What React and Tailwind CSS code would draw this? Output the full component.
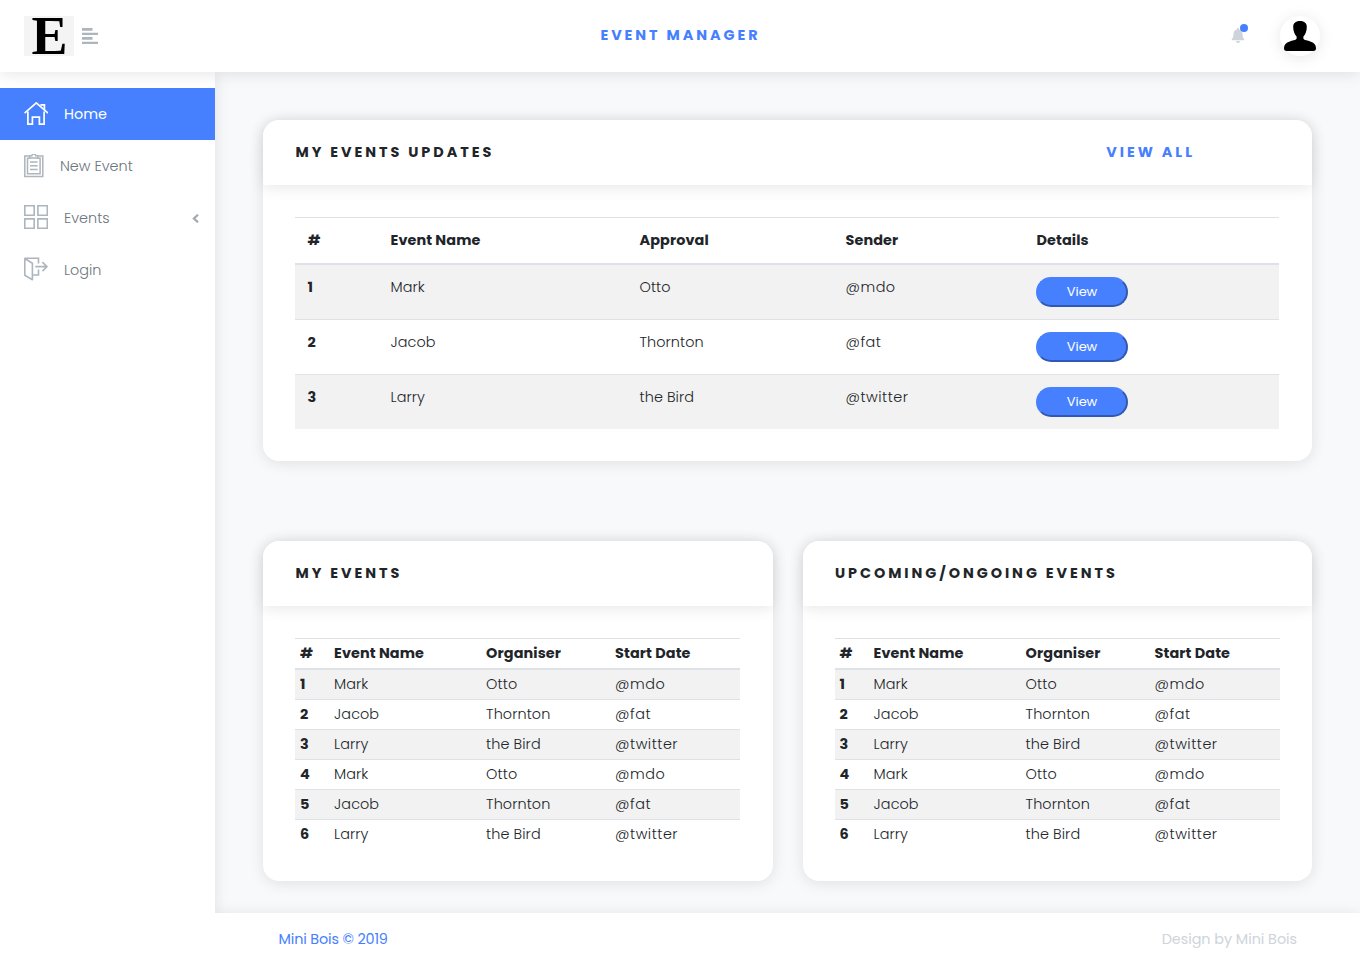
import React from "react";

const PEOPLE = [
  ["Mark", "Otto", "@mdo"],
  ["Jacob", "Thornton", "@fat"],
  ["Larry", "the Bird", "@twitter"],
];

function HomeIcon() {
  return (
    <svg className="h-6 w-6" viewBox="0 0 24 24" fill="none" stroke="currentColor" strokeWidth="1.7">
      <path d="M.6 11.100 12.300.9l11.700 10.200" />
      <path d="M16.400 2.800h4v5.100" />
      <path d="M3.900 9.600v12.500h4.500v-7h7v7h4.700V9.600" />
    </svg>
  );
}

function ClipboardIcon() {
  return (
    <svg className="h-6 w-5" viewBox="0 0 20 24" fill="none" stroke="currentColor" strokeWidth="1.5">
      <path d="M5.500 1.900H.8v20.600h18V1.900h-4.500" />
      <path d="M6 4.200H3.500v15.500h12.600V4.200h-2.500" />
      <path d="M5.800 3.900V1.800h2C8 .6 8.800 0 9.800 0s1.800.6 2 1.800h2v2.100z" />
      <path d="M6 7.900h7.600M6 11.700h7.600M6 15.500h7.600" />
    </svg>
  );
}

function GridIcon() {
  return (
    <svg className="-mt-0.5 h-6 w-6" viewBox="0 0 24 24" fill="none" stroke="currentColor" strokeWidth="1.6">
      <path d="M.8.8h9.400v9.400H.8zM13.900.8h9.400v9.400h-9.400zM.8 13.900h9.400v9.400H.8zM13.900 13.900h9.400v9.400h-9.400z" />
    </svg>
  );
}

function ExitIcon() {
  return (
    <svg className="-mt-0.5 h-6 w-6" viewBox="0 0 24 24" fill="none" stroke="currentColor" strokeWidth="1.6">
      <path d="M.8 1.500v16.800l7.600 4.400V6.300z" strokeLinejoin="round" />
      <path d="M.8 1.200h13.700v5.300M14.500 12.500v5.500H8.800" />
      <path d="M11.300 9.600h11.500M18.400 5.100l4.500 4.500-4.500 4.500" />
    </svg>
  );
}

function NavItem({ icon, label, active, children }) {
  return (
    <li
      className={
        active
          ? "flex h-13 items-center gap-4 bg-[#4680ff] pl-6 pr-4 text-white"
          : "flex h-13 items-center gap-4 pl-6 pr-4 text-[#adb5bd]"
      }
    >
      {icon}
      <span className={active ? "pt-px" : "pt-px font-light text-[#6c757d]"}>{label}</span>
      {children}
    </li>
  );
}

function Card({ title, action, children }) {
  return (
    <section className="rounded-2xl bg-white shadow-[0_2px_15px_rgba(0,0,0,0.1)]">
      <header className="flex h-[65px] items-center rounded-t-2xl bg-white pr-8 pb-px pl-[32.5px] shadow-[0_2px_15px_rgba(0,0,0,0.1)]">
        <h2 className="leading-[17px] font-bold tracking-[2.95px]">{title}</h2>
        {action}
      </header>
      <div className="py-8 pr-[33px] pl-8">{children}</div>
    </section>
  );
}

function UpdatesTable() {
  return (
    <table className="w-full table-fixed border-separate border-spacing-0 text-left">
      <colgroup>
        <col className="w-[83px]" />
        <col className="w-[249px]" />
        <col className="w-[206px]" />
        <col className="w-[191px]" />
        <col />
      </colgroup>
      <thead>
        <tr>
          {["#", "Event Name", "Approval", "Sender", "Details"].map((h) => (
            <th key={h} className="h-12 border-t border-b-2 border-[#dee2e6] pt-px pr-3 pl-[12.5px] font-bold tracking-[0.1px]">
              {h}
            </th>
          ))}
        </tr>
      </thead>
      <tbody>
        {PEOPLE.map((row, i) => {
          const cell = i === 0 ? "h-[54px] pt-3 align-top" : "h-[55px] border-t border-[#dee2e6] pt-3 align-top";
          return (
            <tr key={row[0]} className={i % 2 === 0 ? "bg-[#f2f2f2]" : ""}>
              <th className={`${cell} pl-[12.5px]`}>{i + 1}</th>
              {row.map((v) => (
                <td
                  key={v}
                  className={`${cell} pl-[12.5px] font-light ${v[0] === "@" ? "tracking-[0.5px]" : "tracking-[0.08px]"}`}
                >
                  {v}
                </td>
              ))}
              <td className={`${cell} pl-3`}>
                <button className="block h-[30px] w-[92px] rounded-full border-2 border-t-[#4680ff] border-l-[#4680ff] border-r-[#3159b1] border-b-[#3159b1] bg-[#4680ff] pb-px text-[13px] leading-none tracking-[-0.1px] text-white">
                  View
                </button>
              </td>
            </tr>
          );
        })}
      </tbody>
    </table>
  );
}

function EventsTable() {
  return (
    <div className="-mr-[0.5px]">
      <table className="w-full table-fixed border-separate border-spacing-0 text-left">
        <colgroup>
          <col className="w-[34px]" />
          <col className="w-[152px]" />
          <col className="w-[129px]" />
          <col />
        </colgroup>
        <thead>
          <tr>
            {["#", "Event Name", "Organiser", "Start Date"].map((h) => (
              <th key={h} className="h-8 border-t border-b-2 border-[#dee2e6] pt-px pr-1 pl-[5.1px] font-bold tracking-[0.1px]">
                {h}
              </th>
            ))}
          </tr>
        </thead>
        <tbody>
          {[...PEOPLE, ...PEOPLE].map((row, i) => {
            const cell = i === 0 ? "h-[29px] pt-px pl-[5.1px]" : "h-[30px] border-t border-[#dee2e6] pt-px pl-[5.1px]";
            return (
              <tr key={i} className={i % 2 === 0 ? "bg-[#f2f2f2]" : ""}>
                <th className={cell}>{i + 1}</th>
                {row.map((v) => (
                  <td
                    key={v}
                    className={`${cell} font-light ${v[0] === "@" ? "tracking-[0.5px]" : "tracking-[0.08px]"}`}
                  >
                    {v}
                  </td>
                ))}
              </tr>
            );
          })}
        </tbody>
      </table>
    </div>
  );
}

export default function App() {
  return (
    <div className="flex h-[966px] w-[1360px] flex-col overflow-hidden bg-[#f8f9fa] font-['Poppins','Inter',sans-serif] text-[14.4px] leading-[21.6px] text-[#212529]">
      <header className="relative z-20 flex h-18 shrink-0 items-center bg-white pl-6 pr-10 shadow-[0_2px_15px_rgba(0,0,0,0.1)]">
        <div className="flex flex-1 items-center gap-2">
          <div className="flex h-10 w-[50px] items-center justify-center bg-[#f4f4f4] pl-px font-['Liberation_Serif',serif] text-[54px] leading-none font-bold text-black">
            E
          </div>
          <svg className="h-4 w-4" viewBox="0 0 16 16" fill="#adb5bd">
            <path d="M0 0h10.500v2.800H0zM0 4.800h16v2.300H0zM0 9h10.500v2.800H0zM0 13.700h16V16H0z" />
          </svg>
        </div>
        <h1 className="ml-[17px] font-bold tracking-[2.95px] text-[#4680ff]">EVENT MANAGER</h1>
        <div className="flex flex-1 items-center justify-end gap-[35px]">
          <div className="relative mb-0.5">
            <svg className="h-[15px] w-[14px]" viewBox="0 0 14 15" fill="#ced4da">
              <path d="M7 0c.6 0 1 .4 1 1v.4c2.200.5 3.500 2.200 3.500 4.500 0 3 .7 4 1.500 4.900.6.600.3 1.500-.6 1.500H1.600c-.9 0-1.200-.9-.6-1.500.8-.9 1.500-1.900 1.500-4.900 0-2.300 1.300-4 3.500-4.500V1c0-.6.4-1 1-1zM5 13h4c0 1.200-.9 2-2 2s-2-.8-2-2z" />
            </svg>
            <span className="absolute -top-1 left-[9px] h-2 w-2 rounded-full bg-[#4680ff]" />
          </div>
          <div className="flex h-10 w-10 items-center justify-center rounded-full bg-white shadow-[0_2px_15px_rgba(0,0,0,0.1)]">
            <svg className="h-8 w-8" viewBox="0 0 32 32" fill="#000">
              <path d="M16 1c4.600 0 6.900 2.300 6.800 6.200-.1 3.800-1.300 7.300-3.400 9.300v2.300c1 1.500 4 1.600 7.500 2.900 3.400 1.300 5.100 3.100 5.100 6.500 0 1.800-.9 2.800-2.500 2.800h-27C.9 31 0 30 0 28.200c0-3.400 1.700-5.200 5.100-6.500 3.500-1.300 6.500-1.400 7.500-2.900v-2.300c-2.100-2-3.300-5.500-3.400-9.300C9.100 3.300 11.400 1 16 1z" />
            </svg>
          </div>
        </div>
      </header>

      <div className="flex min-h-0 flex-1">
        <aside className="z-10 w-[215px] shrink-0 bg-white pt-4 shadow-[0_2px_15px_rgba(0,0,0,0.1)]">
          <ul>
            <NavItem icon={<HomeIcon />} label="Home" active />
            <NavItem icon={<ClipboardIcon />} label="New Event" />
            <NavItem icon={<GridIcon />} label="Events">
              <svg className="ml-auto h-[9px] w-[7px]" viewBox="0 0 7 9" fill="none" stroke="#a3a9af" strokeWidth="2.200">
                <path d="M6 .7 1.900 4.500 6 8.300" />
              </svg>
            </NavItem>
            <NavItem icon={<ExitIcon />} label="Login" />
          </ul>
        </aside>

        <div className="flex min-w-0 flex-1 flex-col overflow-hidden">
          <main className="flex flex-1 flex-col gap-20 px-12 pt-12">
            <Card
              title="MY EVENTS UPDATES"
              action={
                <a className="mr-[85px] ml-auto leading-[17px] font-bold tracking-[2.95px] text-[#4680ff]">VIEW ALL</a>
              }
            >
              <UpdatesTable />
            </Card>
            <div className="grid grid-cols-2 gap-[30px]">
              <Card title="MY EVENTS">
                <EventsTable />
              </Card>
              <Card title="UPCOMING/ONGOING EVENTS">
                <EventsTable />
              </Card>
            </div>
          </main>
          <footer className="z-10 flex h-[53px] items-center justify-between bg-white pt-px pr-[63px] pl-[63.500px] tracking-[-0.15px] shadow-[0_2px_15px_rgba(0,0,0,0.1)]">
            <p className="text-[#4680ff]">Mini Bois © 2019</p>
            <p className="tracking-[-0.05px] text-[#ced4da]">Design by Mini Bois</p>
          </footer>
        </div>
      </div>
    </div>
  );
}
